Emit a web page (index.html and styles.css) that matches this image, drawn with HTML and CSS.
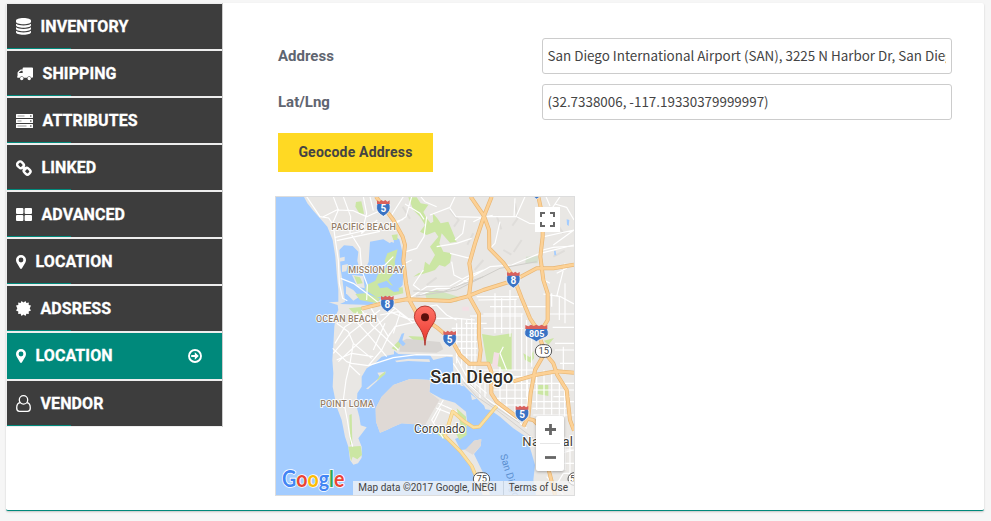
FILE: index.html
```
<!DOCTYPE html>
<html lang="en">
<head>
    <meta charset="UTF-8">
    <meta name="viewport" content="width=device-width, initial-scale=1.0">
    <title>Product location</title>
    <link rel="stylesheet" href="styles.css">
</head>
<body>
    <div class="panel">
        <ul class="tabs">
            <li class="tab">
                <svg class="icon" width="15" height="17" viewBox="0 0 15 17" fill="#fff">
                    <path d="M0 2.6C0 1.2 3 0 7.500 0S15 1.200 15 2.600v1.200c0 1.400-3 2.500-7.500 2.500S0 5.200 0 3.800z"/>
                    <path d="M0 5.700c1.500 1.200 4 1.700 7.500 1.700s6-.5 7.500-1.700v1.600c0 1.400-3 2.500-7.500 2.500S0 8.700 0 7.300z"/>
                    <path d="M0 9.200c1.500 1.200 4 1.700 7.500 1.700s6-.5 7.500-1.700v1.600c0 1.400-3 2.500-7.500 2.500S0 12.200 0 10.800z"/>
                    <path d="M0 12.700c1.500 1.200 4 1.700 7.500 1.700s6-.5 7.500-1.700v1.600c0 1.400-3 2.500-7.500 2.500S0 15.700 0 14.300z"/>
                </svg>
                <span>INVENTORY</span>
            </li>
            <li class="tab">
                <svg class="icon truck" width="16" height="14" viewBox="0 0 17 14" fill="#fff">
                    <path fill-rule="evenodd" d="M7 0h9q1 0 1 1v9q0 1-1 1h-.8a2.300 2.300 0 0 0-4.400 0H7.200a2.300 2.300 0 0 0-4.400 0H1q-1 0-1-1c.6-.4.600-1 .600-2V5.800q0-.6.500-1.100l2-2q.5-.5 1.100-.5H6V1q0-1 1-1zM2 6h4V3.500H4.300L2 5.700z"/>
                    <circle cx="5" cy="11.800" r="1.800"/><circle cx="13" cy="11.800" r="1.800"/>
                </svg>
                <span>SHIPPING</span>
            </li>
            <li class="tab">
                <svg class="icon" width="17" height="14" viewBox="0 0 17 14">
                    <g fill="#fff"><rect width="17" height="4" rx=".5"/><rect y="5" width="17" height="4" rx=".5"/><rect y="10" width="17" height="4" rx=".5"/></g>
                    <path d="M1.500 2h7M1.500 7h4M1.500 12h9" stroke="#999"/>
                    <path d="M14 2h1.500M14 7h1.500M14 12h1.500" stroke="#666" stroke-width="1.300"/>
                </svg>
                <span>ATTRIBUTES</span>
            </li>
            <li class="tab">
                <svg class="icon" width="16" height="16" viewBox="0 0 16 16" fill="none" stroke="#fff" stroke-width="2.400">
                    <rect x="1.200" y="2" width="6.600" height="5.600" rx="2.300" transform="rotate(45 4.500 4.800)"/>
                    <rect x="7.800" y="8.400" width="6.600" height="5.600" rx="2.300" transform="rotate(45 11.100 11.200)"/>
                    <path d="M6 6.200l4 4"/>
                </svg>
                <span>LINKED</span>
            </li>
            <li class="tab">
                <svg class="icon" width="16" height="13" viewBox="0 0 16 13" fill="#fff">
                    <rect width="7.400" height="6" rx="1"/><rect x="8.600" width="7.400" height="6" rx="1"/>
                    <rect y="7" width="7.400" height="6" rx="1"/><rect x="8.600" y="7" width="7.400" height="6" rx="1"/>
                </svg>
                <span>ADVANCED</span>
            </li>
            <li class="tab">
                <svg class="icon" width="10" height="14" viewBox="0 0 10 14" fill="#fff">
                    <path fill-rule="evenodd" d="M5 0a5 5 0 0 1 5 5c0 1-.3 1.800-.6 2.500L6 13.300q-1 1.400-2 0L.6 7.500C.3 6.800 0 6 0 5a5 5 0 0 1 5-5zm0 2.600a2.400 2.400 0 1 0 0 4.800 2.400 2.400 0 0 0 0-4.800z"/>
                </svg>
                <span>LOCATION</span>
            </li>
            <li class="tab">
                <svg class="icon" width="15" height="15" viewBox="0 0 15 15" fill="#fff">
                    <path d="M7.500 1.500 9.500 0l.9 2.100 2.400-.5-.1 2.400 2.300.6-1.300 2.900 1.300 2-2.300.9.100 2.500-2.400-.1-.9 2.200-2-1.500-2 1.500-.9-2.200-2.400.1.100-2.500L0 9.500l1.300-2L0 4.600 2.300 4l-.1-2.400 2.400.5L5.500 0z"/>
                </svg>
                <span>ADSRESS</span>
            </li>
            <li class="tab active">
                <svg class="icon" width="10" height="14" viewBox="0 0 10 14" fill="#fff">
                    <path fill-rule="evenodd" d="M5 0a5 5 0 0 1 5 5c0 1-.3 1.800-.6 2.500L6 13.300q-1 1.400-2 0L.6 7.500C.3 6.800 0 6 0 5a5 5 0 0 1 5-5zm0 2.600a2.400 2.400 0 1 0 0 4.800 2.400 2.400 0 0 0 0-4.800z"/>
                </svg>
                <span>LOCATION</span>
                <svg class="arrow" width="14" height="14" viewBox="0 0 14 14">
                    <circle cx="7" cy="7" r="6" fill="none" stroke="#fff" stroke-width="1.900"/>
                    <path d="M3.200 6h3.600V3.200L10.800 7l-4 3.800V8H3.200z" fill="#fff"/>
                </svg>
            </li>
            <li class="tab">
                <svg class="icon" width="15" height="17" viewBox="0 0 15 17" fill="none" stroke="#fff" stroke-width="1.300">
                    <circle cx="7.500" cy="4.900" r="4.200"/>
                    <path d="M4.200 7.700C1.800 8 .7 10.200.7 13c0 2 1.100 3.300 2.800 3.300h8c1.700 0 2.800-1.300 2.800-3.300 0-2.800-1.100-5-3.500-5.300"/>
                </svg>
                <span>VENDOR</span>
            </li>
        </ul>

        <div class="content">
            <div class="form-row">
                <label for="address">Address</label>
                <input type="text" id="address" value="San Diego International Airport (SAN), 3225 N Harbor Dr, San Diego, CA 92101, USA">
            </div>
            <div class="form-row">
                <label for="latlng">Lat/Lng</label>
                <input type="text" id="latlng" value="(32.7338006, -117.19330379999997)">
            </div>
            <button type="button" class="geocode-button">Geocode Address</button>

            <div class="map">
                <svg class="map-canvas" width="298" height="298" viewBox="18 21 894 894">
                    <defs>
                        <g id="interstate">
                            <path d="M-18-15Q-24 3-15 13Q-9 20 0 25Q9 20 15 13Q24 3 18-15z" fill="#3a73c4" stroke="#fff" stroke-width="2"/>
                            <path d="M-19-12v-11l7 4 6-5 6 4 6-4 6 5 7-4v11z" fill="#d9605c"/>
                        </g>
                        <g id="freeways">
                            <path d="M318 20L340 50L370 90L398 140L405 165L400 210L408 280L418 330L440 370L500 412L545 450L570 495L598 521L655 521L664 545L664 610L680 635L740 680L790 690L830 730L845 800L835 835L855 915"/>
                            <path d="M275 356L330 342L410 328L470 330L540 333L590 320L640 300L730 272L800 235L850 235L912 224"/>
                            <path d="M602 20L642 78L657 120L658 175L700 218L730 260L755 325L780 385L798 412M665 20L642 78L615 160L598 220L604 260L597 318L627 372L627 440L632 480L627 521"/>
                            <path d="M805 20L818 80L818 140L811 200L820 270L833 310L833 390L820 412M812 450L825 490L850 520L862 555L890 600L900 690L912 722M818 500L795 540L782 610L775 680L760 710"/>
                            <path d="M730 574L800 554L860 544L912 548"/>
                        </g>
                    </defs>
                    <rect x="18" y="21" width="894" height="894" fill="#e9e7e4"/>

                    <!-- hills -->
                    <path d="M540 60l26 30-14 20M610 130l-18 34M680 78l14 40M735 40l8 45-16 22M640 210l-26 30M850 200l34-18M398 50l22 36M470 285l30-22M755 150l-24 36M860 100l20 30M700 180l24 14" fill="none" stroke="#dfddda" stroke-width="6"/>

                    <!-- parks -->
                    <g fill="#cbe6a3">
                        <path d="M258 36L274 34L280 60L282 72L268 70L256 50z"/>
                        <path d="M415 22L440 22L452 40L475 44L460 66L470 85L482 100L490 95L488 70L502 85L512 100L535 95L560 155L540 158L515 130L508 160L520 185L545 190L540 218L525 230L508 225L495 240L480 245L430 260L445 250L460 245L465 215L478 225L495 195L480 170L505 140L495 125L470 135L450 125L465 105L450 80L430 60z"/>
                        <path d="M636 432L672 438L725 430L725 540L700 544L688 530L650 516z"/>
                        <path d="M760 490L780 502L790 482L792 505L782 518L765 510zM805 585L835 585L835 618L803 612zM822 452L852 444L835 465z"/>
                        <path d="M365 475L388 450L400 458L380 482zM415 438L458 440L462 454L430 450z"/>
                        <path d="M465 310L500 300L565 320L562 336L470 328z" fill="#d2e5bd"/>
                        <path d="M768 200L805 198L803 220L766 220z" fill="#d5e0cf"/>
                    </g>
                    <path d="M672 486L688 490L682 535L666 525zM577 350h20v12h-20z" fill="#f3dfe4"/>
                    <path d="M392 455L410 446L510 456L520 478L500 488L388 485z" fill="#d8d5d2"/>

                    <!-- ocean and bay -->
                    <path d="M18 21H102L112 40L130 62L150 85L172 110L188 150L196 200L200 250L205 300L205 335L176 337L203 345L205 360L198 375L193 410L190 465L187 510L190 550L188 590L200 650L215 690L225 740L235 770L240 810L250 824L264 820L275 803L275 770L265 745L290 712L272 706L268 680L260 650L262 610L275 590L275 560L290 535L315 520L335 500L372 493L372 482L385 492L480 496L490 510L530 500L548 502L550 545L570 575L600 605L640 645L690 680L730 715L770 742L785 790L795 825L790 870L798 915H18z" fill="#a3ccff"/>
                    <g fill="#e9e7e4">
                        <path d="M375 512L415 506L478 508L480 516L415 513L380 517z"/>
                        <path d="M288 596L330 562L322 548L348 545L325 570L294 598z"/>
                        <path d="M570 575l12 14-10-2zM602 612l18 14-14 4zM640 640l22 20-16-2z"/>
                    </g>
                    <path d="M328 558L346 544L346 552L320 574z" fill="#cbe6a3"/>
                    <path d="M330 728L318 695L317 655L335 620L370 585L420 567L482 570L478 606L515 626L555 638L588 665L592 700L582 735L555 747L572 780L596 778L612 752L634 748L632 768L612 792L640 850L660 915H638L622 870L598 825L560 772L525 745L500 720L485 706L395 700L370 710L350 720z" fill="#e9e7e4"/>
                    <path d="M330 728L318 695L317 655L335 620L370 585L420 567L482 570L478 606L508 630L485 670L465 706L395 700L370 710L350 720zM585 780L612 752L634 748L632 768L608 794z" fill="#dfd9d5"/>
                    <path d="M560 655L588 680L590 735L568 750L558 730L572 705zM490 708L520 730L528 750L505 735z" fill="#cbe6a3"/>
                    <path d="M238 675L245 672L247 760L240 765zM235 770L272 768L276 795L262 808L248 800L243 814z" fill="#cbe6a3"/>

                    <!-- mission bay -->
                    <path d="M208 180L222 166L248 168L265 185L262 212L272 250L285 240L296 215L300 155L340 148L360 160L375 140L388 148L398 190L400 250L398 285L375 310L330 330L300 345L210 342L225 335L222 310L218 275L212 240z" fill="#a3ccff"/>
                    <path d="M208 204l16-4v12l-16 3zM216 226l18-4-5 22-13 2zM246 255L280 258L284 295L262 290L255 275zM342 128L350 152L372 158L370 140L385 142L372 120z" fill="#e9e7e4"/>
                    <path d="M228 288L250 300L268 320L250 332L228 310z" fill="#e9e7e4"/>
                    <g fill="#cbe6a3">
                        <path d="M383 178L352 190L344 212L352 230L325 250L316 272L290 285L285 300L320 322L365 318L400 310L398 292L375 295L355 270L378 240L374 215z"/>
                        <path d="M252 258L270 262L278 280L262 282zM256 312L285 310L330 325L322 340L270 330zM365 135L383 133L382 150L370 150zM236 355L280 350L275 372L250 368z"/>
                    </g>
                    <path d="M322 282L350 272L362 285L385 292L388 304L372 306L352 292L330 295z" fill="#a3ccff"/>
                    <path d="M890 88l8 2-2 18-5-4zM852 182h5l2 14h-6zM385 455l10-24 8-2-6 22 10 10-8 8z" fill="#a3ccff"/>

                    <!-- streets -->
                    <g fill="none" stroke="#fff" stroke-width="3.500" stroke-linejoin="round">
                        <path d="M110 20L150 80L176 84L190 105L196 150L205 210L208 280L218 325L232 332M196 142L290 120L400 88M200 152L330 124M160 80L200 60L250 62L290 80L335 60M190 20L205 60L188 100M220 20L242 80L240 130M280 20L290 70L275 130L322 90M300 20L310 62M400 20L365 75M425 20L408 80L375 102M405 42L450 70L462 88M245 135L270 175L275 240L292 285L290 330"/>
                        <path d="M212 265L250 280L290 310L330 342L372 352L420 390M290 240L345 225L370 200M408 185L440 175L462 140L470 80M405 220L425 210"/>
                        <path d="M200 400L235 425L250 460L305 505M195 460L225 410L290 370M190 490L240 430L330 360M205 515L275 450L375 355M250 385L300 440L350 500M275 360L305 405L385 480M300 350L355 440L375 410L440 395M330 375L385 365L430 400M188 475L230 515L245 520L295 527L335 480L360 430M250 460L240 520L228 570L220 630L232 690L240 740L248 770M200 510L245 490L310 500M238 525L270 555M295 527L370 503L440 494L548 496M390 370L370 430M345 400L310 480M262 365L255 400M345 360L410 385L470 395"/>
                        <path d="M452 20L465 35L500 50M555 20L540 52L480 75M540 55L558 80L640 82M585 90L578 130L555 150M610 95L640 80L738 80M738 80L765 20M740 80L778 100L810 102M640 82L668 76M690 95L675 160L660 175M732 82L735 25M822 90L855 42L870 20M822 140L912 120M818 180L850 172L912 168M855 42L890 52L912 90M912 120L850 165M840 48L828 20"/>
                        <path d="M450 315L500 296L550 295L598 265L660 230L725 225L810 190L912 165M410 330L470 290L540 288L590 260L640 240M460 240L430 285L450 300M540 190L600 205M500 170L560 160L605 145M545 215L552 255L600 280M470 350L500 345L530 375L560 390M500 385L560 385L615 390M820 312L872 320L912 342M885 220L860 320M860 250L890 235M822 270L840 280"/>
                        <path d="M620 320H750M625 330L740 328M600 378H756M585 400H650M660 350H830M640 372H760M640 415H760M675 310V430M695 325V430M720 300V440M735 330V540M755 370V560M770 390V620M785 440V530M845 310V350M868 320V390M885 280V400M840 372H912M848 412H912M855 460H912M560 400V520M575 385V530M590 390V560M605 385V590M615 400V600M545 415H620M555 435H622M560 455H622M560 475H622M560 495H622"/>
                        <path d="M632 540H800M670 560H800M668 580H912M668 600H912M680 625H785M700 645H785M735 665H780M690 530V650M710 560V660M735 560V680M755 560V690M772 570V660M800 560V660M822 540V675M845 540V675M868 580V680M884 600V680M787 635H912M787 655H890M790 675H912M630 560V625M645 545V620M855 480H912M870 520H912M880 470V545M850 620H900M700 470L690 490L710 540"/>
                        <path d="M550 520L585 575L640 620L700 660L770 715M558 500L590 560L650 610M590 560L610 590M840 855L870 790L912 780M850 900L880 850L912 850M885 740V840M900 760V900M860 780H912M858 820H912M830 860L880 915M505 640L545 658M498 654L540 670M520 630L485 690L520 745M530 650L560 665M512 655L490 700"/>
                    </g>
                    <path d="M438 318L560 300L690 235L800 215M430 303L520 305L640 260" stroke="#d0ceca" stroke-width="3" fill="none"/>
                    <path d="M580 575L620 620L680 660L790 745M598 580L660 640L750 700" stroke="#d5d2ce" stroke-width="3" fill="none"/>

                    <!-- freeways -->
                    <g fill="none" stroke-linejoin="round">
                        <use href="#freeways" stroke="#e9b673" stroke-width="12"/>
                        <use href="#freeways" stroke="#fcd196" stroke-width="8"/>
                        <path d="M680 648L628 710L610 712L580 692L548 664L525 738L572 785L605 828L625 875" stroke="#f0c97c" stroke-width="11"/>
                        <path d="M680 648L628 710L610 712L580 692L548 664L525 738L572 785L605 828L625 875" stroke="#fce0a0" stroke-width="7"/>
                    </g>

                    <!-- road shields -->
                    <g class="shield">
                        <use href="#interstate" x="340" y="54"/><text x="340" y="67">5</text>
                        <use href="#interstate" x="352" y="341"/><text x="352" y="354">8</text>
                        <use href="#interstate" x="730" y="269"/><text x="730" y="282">8</text>
                        <use href="#interstate" x="539" y="446"/><text x="539" y="459">5</text>
                        <use href="#interstate" x="756" y="671"/><text x="756" y="684">5</text>
                        <use href="#interstate" x="800" y="2"/>
                        <path d="M768 415Q758 437 773 442Q788 447 799 455Q810 447 826 442Q841 437 831 415z" fill="#3a73c4" stroke="#fff" stroke-width="2"/>
                        <path d="M766 417v-12l9 4 8-5 8 4 8-4 8 4 8-4 8 5 9-4v12z" fill="#d9605c"/>
                        <text class="wide" x="800" y="441">805</text>
                    </g>
                    <g class="route">
                        <rect x="796" y="464" width="49" height="38" rx="19"/><text x="821" y="493">15</text>
                        <rect x="610" y="848" width="49" height="38" rx="19"/><text x="635" y="876">75</text>
                        <rect x="894" y="848" width="49" height="38" rx="19"/><text x="908" y="876">5</text>
                    </g>

                    <!-- place names -->
                    <g class="district">
                        <text x="184" y="121" textLength="194">PACIFIC BEACH</text>
                        <text x="235" y="250" textLength="167">MISSION BAY</text>
                        <text x="138" y="397" textLength="183">OCEAN BEACH</text>
                        <text x="151" y="652" textLength="160">POINT LOMA</text>
                    </g>
                    <text class="town" x="432" y="729" textLength="154">Coronado</text>
                    <text class="town large" x="757" y="769" textLength="152">National</text>
                    <text class="city" x="481" y="580" textLength="249">San Diego</text>
                    <text class="bay" transform="translate(690 796) rotate(73)">San Diego</text>

                    <!-- marker -->
                    <path d="M465 466C462 430 453 420 443 405C436 394 433 387 433 380a32 32 0 0 1 64 0C497 387 494 394 487 405C477 420 468 430 465 466z" fill="url(#pin)" stroke="#a72a22" stroke-width="2.500"/>
                    <circle cx="465" cy="382" r="12" fill="#5b0f0c"/>
                    <linearGradient id="pin" x2="0" y2="1"><stop stop-color="#ff7468"/><stop offset="1" stop-color="#e8332a"/></linearGradient>

                    <text class="logo" x="36" y="892" textLength="187" lengthAdjust="spacingAndGlyphs"><tspan fill="#4285f4">G</tspan><tspan fill="#ea4335">o</tspan><tspan fill="#fbbc05">o</tspan><tspan fill="#4285f4">g</tspan><tspan fill="#34a853">l</tspan><tspan fill="#ea4335">e</tspan></text>
                </svg>
                <button type="button" class="fullscreen">
                    <svg width="15" height="15" viewBox="0 0 15 15" fill="none" stroke="#666" stroke-width="2"><path d="M1 5V1h4M10 1h4v4M14 10v4h-4M5 14H1v-4"/></svg>
                </button>
                <div class="zoom">
                    <button type="button"><svg width="11" height="11" viewBox="0 0 11 11"><path d="M0 5.500h11M5.500 0v11" stroke="#666" stroke-width="2.800"/></svg></button>
                    <button type="button"><svg width="11" height="11" viewBox="0 0 11 11"><path d="M0 5.500h11" stroke="#666" stroke-width="2.800"/></svg></button>
                </div>
                <div class="copyright">
                    <span>Map data ©2017 Google, INEGI</span>
                    <span>Terms of Use</span>
                </div>
            </div>
        </div>
    </div>
</body>
</html>
```
FILE: styles.css
```
* {
    box-sizing: border-box;
}

body {
    margin: 0;
    padding: 3px 7px 10px 6px;
    height: 521px;
    overflow: hidden;
    background: #f6f6f6;
    font-family: Roboto, sans-serif;
}

.panel {
    display: flex;
    height: 508px;
    background: #fff;
    border-bottom: 1px solid #00897b;
    border-radius: 2px;
    box-shadow: 0 1px 2px rgba(0, 0, 0, 0.2);
}

.tabs {
    display: flex;
    flex-direction: column;
    align-self: flex-start;
    gap: 2px;
    width: 217px;
    margin: 0;
    padding: 1px 0 1px 1px;
    list-style: none;
    background: #eee;
    border-right: 1px solid #ccc;
}

.tab {
    display: flex;
    align-items: center;
    gap: 9.5px;
    height: 45px;
    padding: 0 20px 0 9px;
    background: linear-gradient(#00897b, #00897b) left bottom / 64px 1px no-repeat #3d3d3d;
    color: #fff;
    font-size: 16px;
    font-weight: 700;
    letter-spacing: 0.1px;
    -webkit-text-stroke: 0.3px #fff;
}

.tab.active {
    height: 46px;
    padding-bottom: 1px;
    background: #00897b;
}

.icon {
    flex: none;
}

.truck {
    margin-left: 1px;
}

.arrow {
    margin: 1px 0 0 auto;
}

.content {
    padding: 35px 0 0 52px;
}

.form-row {
    display: flex;
    align-items: center;
    margin: 0 0 10px 3px;
}

label {
    width: 264px;
    color: #5f6570;
    font-size: 15px;
    font-weight: 700;
}

input {
    width: 410px;
    height: 36px;
    padding: 0 5px 2px 4.5px;
    border: 1px solid #ccc;
    border-radius: 3px;
    background: #fff;
    color: #444;
    font-family: "Noto Sans CJK SC", sans-serif;
    font-size: 13.4px;
}

.geocode-button {
    display: block;
    width: 155px;
    height: 39px;
    margin: 13px 0 24px 3px;
    padding: 0 0 2px;
    border: none;
    background: #ffd923;
    color: #444;
    font-family: Roboto, sans-serif;
    font-size: 14px;
    font-weight: 700;
    letter-spacing: 0.2px;
}

.map {
    position: relative;
    width: 300px;
    height: 300px;
    border: 1px solid #ddd;
    overflow: hidden;
}

.map-canvas {
    display: block;
}

.map-canvas text {
    font-family: Roboto, sans-serif;
    paint-order: stroke;
}

.shield text {
    fill: #fff;
    font-size: 30px;
    font-weight: 700;
    text-anchor: middle;
}

.shield .wide {
    font-size: 27px;
}

.route rect {
    fill: #fff;
    stroke: #555;
    stroke-width: 3px;
}

.route text {
    fill: #444;
    font-size: 28px;
    text-anchor: middle;
}

.district text {
    fill: #95806a;
    stroke: #fff;
    stroke-width: 5px;
    font-size: 27px;
    font-weight: 500;
}

.town {
    fill: #443f38;
    stroke: #fff;
    stroke-width: 6px;
    font-size: 36px;
}

.town.large {
    font-size: 39px;
}

.city {
    fill: #302c26;
    stroke: #fff;
    stroke-width: 7px;
    font-size: 54px;
    font-weight: 500;
}

.bay {
    fill: #5b8fd0;
    font-size: 30px;
}

.map-canvas .logo {
    stroke: #fff;
    stroke-width: 5px;
    font-family: Lato, sans-serif;
    font-size: 66px;
    font-weight: 700;
}

.fullscreen {
    position: absolute;
    top: 10px;
    right: 14px;
    display: flex;
    align-items: center;
    justify-content: center;
    width: 25px;
    height: 25px;
    padding: 0;
    border: none;
    background: #fff;
}

.zoom {
    position: absolute;
    right: 10px;
    bottom: 24px;
    width: 28px;
    height: 55px;
    border-radius: 2px;
    background: #fff;
    box-shadow: 0 1px 3px rgba(0, 0, 0, 0.3);
}

.zoom button {
    display: flex;
    align-items: center;
    justify-content: center;
    width: 20px;
    height: 27px;
    margin: 0 4px;
    padding: 0;
    border: none;
    background: none;
}

.zoom button + button {
    height: 28px;
    border-top: 1px solid #e6e6e6;
}

.copyright {
    position: absolute;
    right: 0;
    bottom: 0;
    display: flex;
    height: 14px;
    background: rgba(245, 245, 245, 0.75);
    color: #444;
    font-size: 10px;
    line-height: 14px;
    white-space: nowrap;
}

.copyright span {
    padding: 0 6px 0 5px;
}

.copyright span + span {
    border-left: 1px solid #c8d4e2;
}
```
